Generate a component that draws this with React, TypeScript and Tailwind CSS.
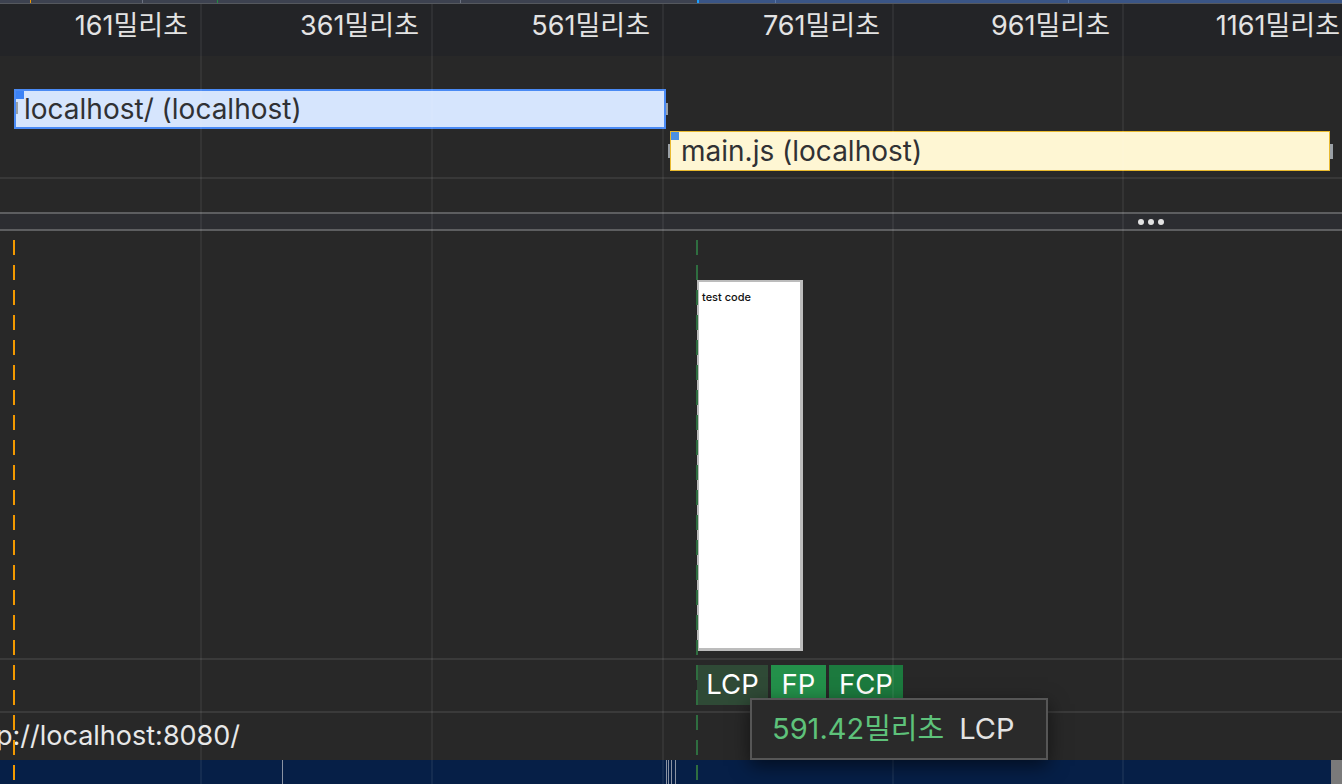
import React from 'react';

const rulerCells = [
  { w: 'w-[200px]', label: '161밀리초' },
  { w: 'w-[231px]', label: '361밀리초' },
  { w: 'w-[231px]', label: '561밀리초' },
  { w: 'w-[230px]', label: '761밀리초' },
  { w: 'w-[230px]', label: '961밀리초' },
  { w: 'w-[230px]', label: '1161밀리초' },
];

// grid line x positions (ms divisions)
const gridX = [200, 431, 662, 892, 1122];

const App: React.FC = () => {
  return (
    <div className="relative w-[1342px] h-[784px] overflow-hidden bg-[#282828] font-['Inter','Noto_Sans_CJK_KR',sans-serif] flex flex-col">
      {/* overview strip */}
      <div className="relative h-[3px] flex shrink-0">
        <div className="w-[697px] bg-[#3d4250]" />
        <div className="flex-1 bg-[#3a5586]" />
        <span className="absolute left-[30px] top-0 h-full w-px bg-[#f29900]" />
        <span className="absolute left-[142px] top-0 h-full w-px bg-[#6b7180]" />
        <span className="absolute left-[217px] top-0 h-full w-px bg-[#1e8e3e]" />
        <span className="absolute left-[460px] top-0 h-full w-px bg-[#6b7180]" />
        <span className="absolute left-[697px] top-0 h-full w-[2px] bg-[#1a9fff]" />
        <span className="absolute left-[775px] top-0 h-full w-px bg-[#5b78a8]" />
        <span className="absolute left-[1068px] top-0 h-full w-px bg-[#5b78a8]" />
      </div>
      <div className="h-px bg-[#55585e] shrink-0" />

      {/* time ruler */}
      <div className="h-[52px] bg-[#232427] flex shrink-0">
        {rulerCells.map((c) => (
          <div
            key={c.label}
            className={`${c.w} shrink-0 text-right pr-[12px] pt-[7px] text-[27px] leading-[30px] text-[#e3e3e3] whitespace-nowrap`}
          >
            {c.label}
          </div>
        ))}
      </div>

      {/* network track */}
      <div className="h-[156px] shrink-0 flex flex-col pt-[33px]">
        <div className="h-[40px] flex items-center">
          <div className="relative ml-[14px] w-[652px] h-[40px] bg-[#d6e5fd] border-2 border-[#4a8af4] flex items-center pl-[8px] text-[28px] text-[#303134] whitespace-nowrap">
            <span className="absolute left-0 top-0 w-[8px] h-[8px] bg-[#3b82f6]" />
            <span className="absolute left-0 top-[11px] w-[2px] h-[12px] bg-[#9aa0a6]" />
            localhost/ (localhost)
          </div>
          <div className="w-[2px] h-[12px] bg-[#9aa0a6]" />
        </div>
        <div className="h-[40px] mt-[2px] flex items-center">
          <div className="ml-[668px] w-[2px] h-[14px] bg-[#9aa0a6]" />
          <div className="relative w-[660px] h-[40px] bg-[#fef6d3] border-[1.5px] border-[#e8b92e] flex items-center pl-[10px] text-[28px] text-[#303134] whitespace-nowrap">
            <span className="absolute left-0 top-0 w-[8px] h-[8px] bg-[#4a90e2]" />
            main.js (localhost)
          </div>
          <div className="w-[3px] h-[15px] bg-[#9aa0a6]" />
        </div>
        <div className="mt-[6px] h-[2px] bg-[#383838]" />
      </div>

      {/* section divider */}
      <div className="h-[2px] bg-[#5d5e60] shrink-0" />
      <div className="h-[15px] bg-[#2c2d31] shrink-0 flex items-center justify-end pr-[178px] gap-[4px]">
        <span className="w-[6px] h-[6px] rounded-full bg-[#e3e3e3]" />
        <span className="w-[6px] h-[6px] rounded-full bg-[#e3e3e3]" />
        <span className="w-[6px] h-[6px] rounded-full bg-[#e3e3e3]" />
      </div>
      <div className="h-[2px] bg-[#5d5e60] shrink-0" />

      {/* frames */}
      <div className="h-[427px] shrink-0 pt-[49px] pl-[697px]">
        <div className="w-[106px] h-[371px] bg-white border-2 border-r-[3px] border-b-[3px] border-[#bcbcbc] pl-[3px] pt-[8px]">
          <div className="text-[11px] leading-[14px] font-medium text-[#111]">test code</div>
        </div>
      </div>
      <div className="h-[2px] bg-[#3a3a3a] shrink-0" />

      {/* timings */}
      <div className="h-[51px] shrink-0 pt-[5px] pl-[697px] flex items-start gap-[3px] text-[27.5px] text-white">
        <div className="w-[71px] h-[40px] bg-[#2f4a36] flex items-center justify-center">LCP</div>
        <div className="w-[55px] h-[40px] bg-[#23904a] flex items-center justify-center">FP</div>
        <div className="w-[74px] h-[40px] bg-[#1c7a3e] flex items-center justify-center">FCP</div>
      </div>
      <div className="h-[2px] bg-[#3a3a3a] shrink-0" />

      {/* main thread url */}
      <div className="h-[47px] shrink-0 flex items-center text-[27px] text-[#e8e8e8] whitespace-nowrap">
        <span className="-ml-[37px]">http://localhost:8080/</span>
      </div>

      {/* bottom lane */}
      <div className="relative flex-1 bg-[#061f47]">
        <span className="absolute left-[282px] top-0 h-full w-px bg-[#8a93a3]" />
        <span className="absolute left-[666px] top-0 h-full w-px bg-[#8a93a3]" />
        <span className="absolute left-[668px] top-0 h-full w-px bg-[#8a93a3]" />
        <span className="absolute left-[671px] top-0 h-full w-px bg-[#8a93a3]" />
        <span className="absolute left-[675px] top-0 h-full w-px bg-[#8a93a3]" />
        <span className="absolute right-0 top-0 h-full w-[11px] bg-[#7a7a7a]" />
      </div>

      {/* grid lines */}
      {gridX.map((x) => (
        <div
          key={x}
          className="absolute top-[4px] bottom-0 w-[2px] bg-white/[0.06] pointer-events-none"
          style={{ left: x }}
        />
      ))}

      {/* navigation / LCP markers */}
      <div className="absolute left-[13px] top-[240px] bottom-0 w-[2px] bg-[repeating-linear-gradient(to_bottom,#f29900_0_15px,transparent_15px_25px)]" />
      <div className="absolute left-[696px] top-[240px] bottom-0 w-[2px] bg-[repeating-linear-gradient(to_bottom,#2f6e40_0_15px,transparent_15px_25px)]" />

      {/* tooltip */}
      <div className="absolute left-[750px] top-[698px] w-[298px] h-[62px] bg-[#2a2a2a] border-2 border-[#565656] shadow-[0_6px_18px_rgba(0,0,0,0.55)] flex items-center pl-[20px] gap-[15px] text-[29px] whitespace-nowrap">
        <span className="text-[#5ec27a]">591.42밀리초</span>
        <span className="text-[#e3e3e3]">LCP</span>
      </div>
    </div>
  );
};

export default App;
